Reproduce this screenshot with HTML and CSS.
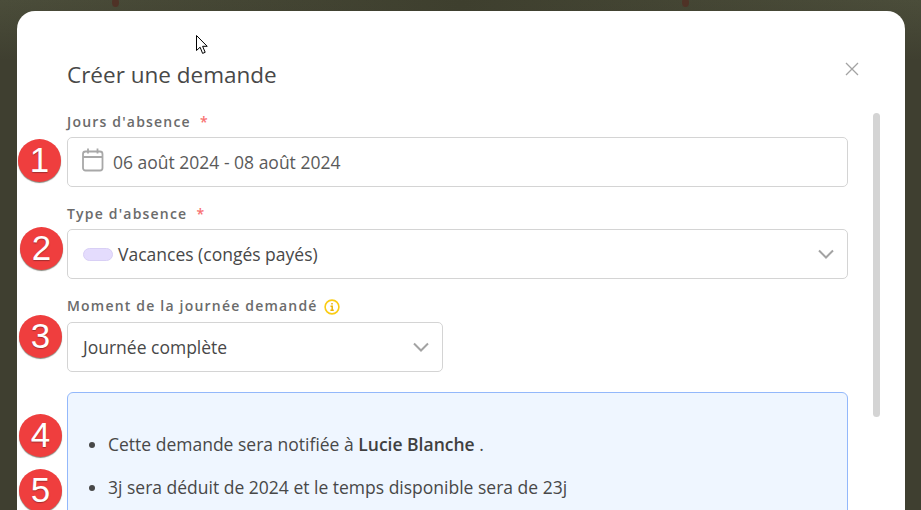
FILE: index.html
```html
<!DOCTYPE html>
<html lang="fr">
<head>
<meta charset="utf-8">
<title>Créer une demande</title>
<link rel="stylesheet" href="styles.css">
</head>
<body>
<span class="dot dot-a"></span>
<span class="dot dot-b"></span>
<main class="modal">
  <div class="content">
    <header class="head">
      <h1 class="title">Créer une demande</h1>
      <svg class="close" width="14" height="14" viewBox="0 0 14 14"><path d="M1 1l12 12M13 1L1 13" fill="none" stroke="#a3a3a3" stroke-width="1.3"/></svg>
    </header>
    <div class="field field-first">
      <label class="label"><span>Jours d'absence</span><span class="req">*</span></label>
      <div class="control">
        <svg class="cal" width="22" height="24" viewBox="0 0 22 24" fill="none" stroke="#a8a8a8" stroke-width="1.8"><rect x="1" y="3.5" width="19.5" height="19" rx="2.5"/><path d="M1 9h19.5M6 .5v5M15.5 .5v5"/></svg>
        <span class="value muted">06 août 2024 - 08 août 2024</span>
      </div>
    </div>
    <div class="field">
      <label class="label"><span>Type d'absence</span><span class="req">*</span></label>
      <div class="control">
        <span class="pill"></span>
        <span class="value">Vacances (congés payés)</span>
        <svg class="chev" width="16" height="10" viewBox="0 0 16 10"><path d="M1 1.5l7 7 7-7" fill="none" stroke="#a3a3a3" stroke-width="2"/></svg>
      </div>
    </div>
    <div class="field field-third">
      <label class="label"><span>Moment de la journée demandé</span><svg class="info" width="16" height="16" viewBox="0 0 16 16"><circle cx="8" cy="8" r="6.9" fill="none" stroke="#facc15" stroke-width="1.6"/><path d="M8 3.9v1.7M6.5 7.2H8.2v4M6.4 11.3h3.4" fill="none" stroke="#eab308" stroke-width="1.5"/></svg></label>
      <div class="control control-short">
        <span class="value">Journée complète</span>
        <svg class="chev" width="16" height="10" viewBox="0 0 16 10"><path d="M1 1.5l7 7 7-7" fill="none" stroke="#a3a3a3" stroke-width="2"/></svg>
      </div>
    </div>
    <section class="notice">
      <ul class="notes">
        <li>Cette demande sera notifiée à <strong>Lucie Blanche</strong> .</li>
        <li>3j sera déduit de 2024 et le temps disponible sera de 23j</li>
      </ul>
    </section>
  </div>
  <div class="scrollbar"></div>
</main>
<span class="badge b1">1</span>
<span class="badge b2">2</span>
<span class="badge b3">3</span>
<span class="badge b4">4</span>
<span class="badge b5">5</span>
<svg class="cursor" width="13" height="20" viewBox="0 0 13 20"><path d="M.5.5v15l3.6-3.3 2.5 6.2 2.6-1.1-2.6-6h4.6z" fill="#fff" stroke="#000" stroke-width="1"/></svg>
</body>
</html>
```
FILE: styles.css
```css
html, body {
  margin: 0;
  height: 100%;
  overflow: hidden;
}
body {
  position: relative;
  background: linear-gradient(180deg, rgba(62, 62, 46, 0) 0, #3f3f30 60px), linear-gradient(90deg, #4b4d3a 0%, #3e3f2e 50%, #4b4d3a 100%);
  font-family: "Open Sans", "Liberation Sans", sans-serif;
  color: #404040;
  padding: 11px 16px 0 17px;
  box-sizing: border-box;
}
.dot {
  position: absolute;
  top: -2px;
  width: 7px;
  height: 9px;
  border-radius: 50%;
  background: #4f3226;
}
.dot-a { left: 112px; }
.dot-b { left: 682px; }
.modal {
  position: relative;
  background: #fff;
  border-radius: 18px 18px 0 0;
  height: 520px;
  overflow: hidden;
}
.content {
  width: 781px;
  margin-left: 50px;
}
.head {
  position: relative;
  height: 101px;
}
.title {
  margin: 0;
  padding-top: 48px;
  font-size: 22.5px;
  line-height: 32px;
  font-weight: 400;
  color: #484848;
}
.close {
  position: absolute;
  left: 778px;
  top: 51px;
}
.field { margin-top: 17px; }
.field-first { margin-top: 0; }
.field-third { margin-top: 17px; }
.field-third .label { margin-bottom: 6px; }
.label {
  display: flex;
  align-items: center;
  height: 20px;
  gap: 6px;
  margin-bottom: 5px;
  font-size: 14px;
  line-height: 20px;
  font-weight: 600;
  letter-spacing: 1.2px;
  color: #6b6b6b;
}
.req {
  color: #f87171;
  margin-left: 3px;
}
.control {
  display: flex;
  align-items: center;
  box-sizing: border-box;
  height: 50px;
  padding: 0 13px 0 15px;
  border: 1px solid #d4d4d4;
  border-radius: 5px;
  background: #fff;
}
.control-short { width: 376px; }
.cal { margin-left: -1px; margin-right: 9px; margin-top: -4px; }
.value {
  flex: 1;
  font-size: 17.5px;
  color: #484848;
}
.muted { color: #5a5a5a; }
.pill {
  width: 30px;
  height: 13px;
  box-sizing: border-box;
  margin-right: 5px;
  border: 1px solid #d8cff5;
  border-radius: 7px;
  background: #e4dcfd;
}
.info { margin-top: 1px; }
.notice {
  margin-top: 20px;
  height: 160px;
  box-sizing: border-box;
  border: 1px solid #93b8fb;
  border-radius: 6px;
  background: #eff6ff;
  padding-top: 39px;
}
.notes {
  margin: 0;
  padding-left: 40px;
  font-size: 17.5px;
  color: #484848;
}
.notes li {
  line-height: 24px;
  margin-bottom: 19px;
}
.notes strong { font-weight: 600; color: #404040; }
.scrollbar {
  position: absolute;
  left: 856px;
  top: 102px;
  width: 7px;
  height: 304px;
  border-radius: 4px;
  background: #d4d4d4;
}
.badge {
  position: absolute;
  width: 43px;
  height: 43px;
  border-radius: 50%;
  background: #ef3e3e;
  box-shadow: 0 1px 1px #8a8a80;
  color: #fff;
  font-family: "Liberation Sans", Arial, sans-serif;
  font-size: 35px;
  line-height: 42px;
  text-align: center;
  text-shadow: 0 1px 1px rgba(90, 30, 30, .5);
}
.b1 { left: 18px; top: 139px; }
.b2 { left: 20px; top: 227px; }
.b3 { left: 19px; top: 315px; }
.b4 { left: 19px; top: 414px; }
.b5 { left: 19px; top: 469px; }
.cursor {
  position: absolute;
  left: 196px;
  top: 35px;
}
```
